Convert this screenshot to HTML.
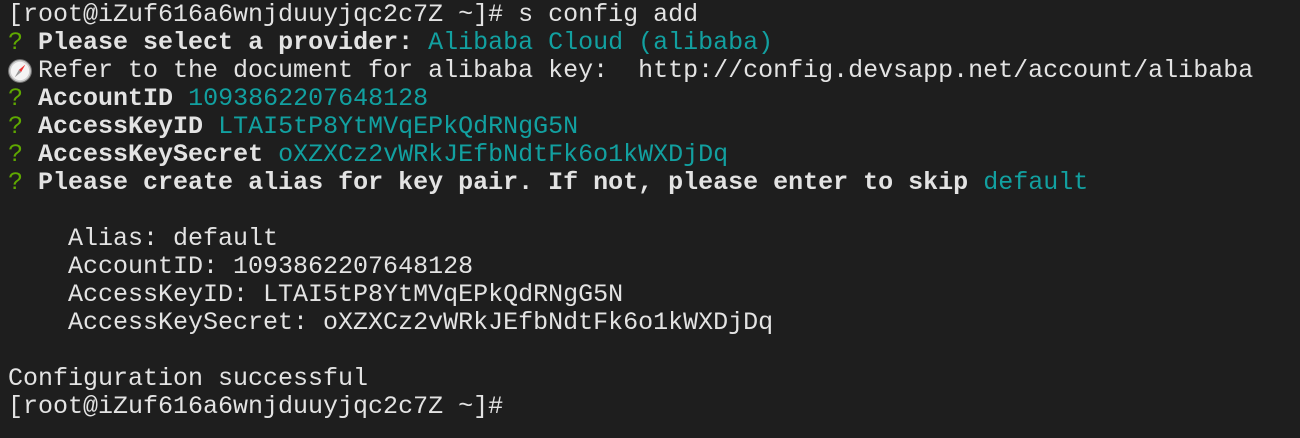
<!DOCTYPE html><html><head><style>
body{margin:0;background:#1e1e1e;width:1300px;height:438px;overflow:hidden}
pre{margin:0;padding:1px 0 0 8px;font-family:"Liberation Mono","DejaVu Sans Mono",monospace;font-size:25px;line-height:28px;color:#e3e3e3}
.g{color:#5fa800}.c{color:#12a0a0}b{font-weight:bold}
.e{display:inline-block;width:30px;height:28px;vertical-align:top;position:relative}
.e svg{position:absolute;left:-1px;top:1px}
</style></head><body><pre>[root@iZuf616a6wnjduuyjqc2c7Z ~]# s config add
<span class="g">?</span> <b>Please select a provider:</b> <span class="c">Alibaba Cloud (alibaba)</span>
<span class="e"><svg width="26" height="26" viewBox="0 0 24 24"><circle cx="12" cy="12" r="10.5" fill="#ccc" stroke="#777" stroke-width="1"/><circle cx="12" cy="12" r="8.5" fill="#f4f4f4"/><path d="M17 6L13 13L11 11Z" fill="#e33"/><path d="M7 18L11 11L13 13Z" fill="#999"/></svg></span>Refer to the document for alibaba key:  http://config.devsapp.net/account/alibaba
<span class="g">?</span> <b>AccountID</b> <span class="c">1093862207648128</span>
<span class="g">?</span> <b>AccessKeyID</b> <span class="c">LTAI5tP8YtMVqEPkQdRNgG5N</span>
<span class="g">?</span> <b>AccessKeySecret</b> <span class="c">oXZXCz2vWRkJEfbNdtFk6o1kWXDjDq</span>
<span class="g">?</span> <b>Please create alias for key pair. If not, please enter to skip</b> <span class="c">default</span>

    Alias: default
    AccountID: 1093862207648128
    AccessKeyID: LTAI5tP8YtMVqEPkQdRNgG5N
    AccessKeySecret: oXZXCz2vWRkJEfbNdtFk6o1kWXDjDq

Configuration successful
[root@iZuf616a6wnjduuyjqc2c7Z ~]#</pre></body></html>
